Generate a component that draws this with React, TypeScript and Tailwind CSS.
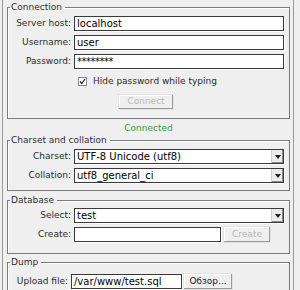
import React from "react"

function Field({ label, children }: { label: string; children: React.ReactNode }) {
  return (
    <div className="flex items-center h-[15px]">
      <span className="w-[64px] shrink-0 text-right pr-[1px] text-[#2b2b2b]">{label}</span>
      <div className="ml-[2px] flex-1 flex items-center">{children}</div>
    </div>
  )
}

function TextBox({ value, className = "" }: { value: string; className?: string }) {
  return (
    <div
      className={`h-[15px] bg-white border border-[#3a3a3a] shadow-[1px_1px_0_#fff] px-[2px] flex items-center text-[10px] text-black leading-none ${className}`}
    >
      {value}
    </div>
  )
}

function Select({ value }: { value: string }) {
  return (
    <div className="h-[15px] w-full bg-white border border-[#3a3a3a] shadow-[1px_1px_0_#fff] flex items-center text-[10px] text-black leading-none">
      <span className="flex-1 px-[2px]">{value}</span>
      <span className="w-[12px] h-[13px] bg-[#ececec] border-l border-[#cfcfcf] shadow-[inset_-1px_-1px_0_#8a8a8a] flex items-center justify-center">
        <svg width="6" height="4" viewBox="0 0 6 4">
          <path d="M0 0h6L3 4z" fill="#222" />
        </svg>
      </span>
    </div>
  )
}

function Button({ label, disabled, className = "" }: { label: string; disabled?: boolean; className?: string }) {
  return (
    <div
      className={`h-[16px] bg-[#efefef] border border-[#e2e2e2] shadow-[inset_-1px_-1px_0_#9a9a9a,inset_1px_1px_0_#fff] flex items-center justify-center ${
        disabled ? "text-[#b8b8b8]" : "text-[#222]"
      } ${className}`}
    >
      {label}
    </div>
  )
}

function Group({ title, className = "", children }: { title: string; className?: string; children: React.ReactNode }) {
  return (
    <fieldset className={`border border-[#7c7c7c] shadow-[inset_1px_1px_0_#fff] pl-0 pr-[5px] ${className}`}>
      <legend className="ml-[2px] pl-[1px] pr-[3px] leading-[11px] text-[#2b2b2b]">{title}</legend>
      {children}
    </fieldset>
  )
}

export default function App() {
  return (
    <div className="w-[300px] h-[290px] overflow-hidden bg-[#efefef] font-['DejaVu_Sans',sans-serif] text-[9px]">
      <div className="ml-[2px] w-[292px] h-[290px] border-l border-r border-[#9a9a9a] pl-[4px] pr-[3px] pt-[2px]">
        {/* Connection */}
        <Group title="Connection" className="pt-[3px] pb-[8px]">
          <div className="flex flex-col gap-[4px]">
            <Field label="Server host:">
              <TextBox value="localhost" className="w-full" />
            </Field>
            <Field label="Username:">
              <TextBox value="user" className="w-full" />
            </Field>
            <Field label="Password:">
              <TextBox value="********" className="w-full tracking-[-0.5px]" />
            </Field>
          </div>
          <div className="mt-[7px] ml-[70px] flex items-center h-[11px]">
            <span className="w-[9px] h-[9px] bg-white border border-[#8a8a8a] flex items-center justify-center">
              <svg width="7" height="7" viewBox="0 0 7 7">
                <path d="M1 3.5l1.8 2L6 1" stroke="#222" strokeWidth="1.2" fill="none" />
              </svg>
            </span>
            <span className="ml-[6px] text-[#2b2b2b]">Hide password while typing</span>
          </div>
          <div className="mt-[7px] flex justify-center">
            <Button label="Connect" disabled className="w-[56px]" />
          </div>
        </Group>

        <p className="pt-[4px] pb-[1px] leading-[11px] text-center text-[#3d9a3d]">Connected</p>

        {/* Charset and collation */}
        <Group title="Charset and collation" className="pt-[3px] pb-[7px]">
          <div className="flex flex-col gap-[4px]">
            <Field label="Charset:">
              <Select value="UTF-8 Unicode (utf8)" />
            </Field>
            <Field label="Collation:">
              <Select value="utf8_general_ci" />
            </Field>
          </div>
        </Group>

        {/* Database */}
        <Group title="Database" className="mt-[4px] pt-[2px] pb-[11px]">
          <div className="flex flex-col gap-[4px]">
            <Field label="Select:">
              <Select value="test" />
            </Field>
            <Field label="Create:">
              <TextBox value="" className="w-[147px] bg-[#f4f4f4]" />
              <Button label="Create" disabled className="ml-[2px] w-[48px] h-[17px]" />
            </Field>
          </div>
        </Group>

        {/* Dump */}
        <Group title="Dump" className="mt-[3px] pt-[5px] pb-[8px]">
          <div className="flex items-center h-[17px]">
            <span className="w-[60px] shrink-0 text-right text-[#2b2b2b]">Upload file:</span>
            <TextBox value="/var/www/test.sql" className="ml-[3px] w-[111px]" />
            <Button label="Обзор..." className="ml-[1px] w-[50px] h-[17px]" />
          </div>
        </Group>
      </div>
    </div>
  )
}
